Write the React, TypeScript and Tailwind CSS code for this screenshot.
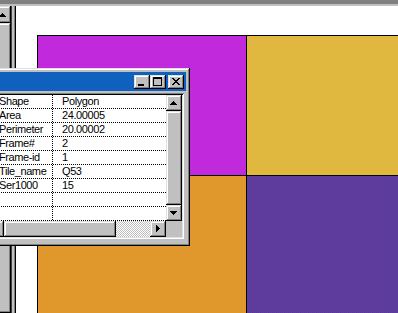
const raised =
  'bg-[#c0c0c0] shadow-[inset_-1px_-1px_#000,inset_1px_1px_#dfdfdf,inset_-2px_-2px_#808080,inset_2px_2px_#fff]';

const rows: [string, string][] = [
  ['Shape', 'Polygon'],
  ['Area', '24.00005'],
  ['Perimeter', '20.00002'],
  ['Frame#', '2'],
  ['Frame-id', '1'],
  ['Tile_name', 'Q53'],
  ['Ser1000', '15'],
  ['', ''],
  ['', ''],
];

/* ─── Pixel glyphs ─── */
const Glyph = ({ d, w = 16, h = 14 }: { d: string; w?: number; h?: number }) => (
  <svg width={w} height={h} viewBox={`0 0 ${w} ${h}`} shapeRendering="crispEdges">
    <path d={d} fill="#000" />
  </svg>
);

const UP = 'M7 6h1v1h-1zM6 7h3v1h-3zM5 8h5v1h-5zM4 9h7v1h-7z';
const DOWN = 'M4 6h7v1h-7zM5 7h5v1h-5zM6 8h3v1h-3zM7 9h1v1h-1z';
const RIGHT = 'M6 4h1v7h-1zM7 5h1v5h-1zM8 6h1v3h-1zM9 7h1v1h-1z';
const MIN = 'M4 9h6v2h-6z';
const MAX = 'M3 2h9v2h-9zM3 4h1v7h-1zM11 4h1v7h-1zM3 10h9v1h-9z';
const CLOSE =
  'M4 3h2v1h-2zM10 3h2v1h-2zM5 4h2v1h-2zM9 4h2v1h-2zM6 5h4v1h-4zM7 6h2v1h-2zM6 7h4v1h-4zM5 8h2v1h-2zM9 8h2v1h-2zM4 9h2v1h-2zM10 9h2v1h-2z';

const TitleButton = ({ d }: { d: string }) => (
  <div className={`h-[14px] w-[16px] ${raised}`}>
    <Glyph d={d} />
  </div>
);

export default function App() {
  return (
    <div className="relative h-[313px] w-[398px] overflow-hidden bg-[#c0c0c0] font-['Liberation_Sans',Arial,sans-serif] text-[11px] tracking-[-0.4px] text-black">
      {/* ── App frame top ── */}
      <div className="h-[4px] bg-[#808080]" />
      <div className="h-[2px] bg-[#c0c0c0]" />

      <div className="flex h-[307px]">
        {/* ── Left scrollbar of the map window ── */}
        <div className="flex w-[11px] flex-col overflow-hidden">
          <div className={`ml-[-5px] h-[17px] w-[16px] shrink-0 ${raised}`}>
            <div className="pt-[1px]">
              <Glyph d={UP} />
            </div>
          </div>
          <div className={`ml-[-5px] w-[16px] flex-1 ${raised}`} />
        </div>
        <div className="w-px bg-[#404040]" />
        <div className="w-[2px] bg-[#c0c0c0]" />
        <div className="w-px bg-[#808080]" />
        <div className="w-px bg-black" />

        {/* ── Map canvas ── */}
        <div className="flex-1 bg-white pl-[21px] pt-[29px]">
          <div className="grid h-full grid-cols-[208px_1fr] grid-rows-[139px_1fr] gap-px border-l border-t border-black bg-black">
            <div className="bg-[#c02adc]" />
            <div className="bg-[#e0b840]" />
            <div className="bg-[#e0982c]" />
            <div className="bg-[repeating-conic-gradient(#5a3a9a_0_25%,#613fa1_0_50%)] bg-[length:2px_2px]" />
          </div>
        </div>
      </div>

      {/* ── Attributes window ── */}
      <div className="absolute left-[-20px] top-[68px] w-[210px] bg-[#c0c0c0] p-[4px] shadow-[inset_-1px_-1px_#000,inset_1px_1px_#dfdfdf,inset_-2px_-2px_#808080,inset_2px_2px_#fff]">
        <div className="flex h-[19px] items-center justify-end bg-[#1061bd] pr-[2px]">
          <TitleButton d={MIN} />
          <TitleButton d={MAX} />
          <div className="w-[2px]" />
          <TitleButton d={CLOSE} />
        </div>

        <div className="mx-[2px] mb-[3px] mt-[2px] p-[2px] shadow-[inset_1px_1px_#808080,inset_-1px_-1px_#fff,inset_2px_2px_#000,inset_-2px_-2px_#dfdfdf]">
          <div className="flex">
            <div className="w-[178px] bg-white">
              {rows.map(([field, value], i) => (
                <div key={i} className="flex h-[14px] border-b border-dotted border-black leading-[13px]">
                  <div className="w-[65px] shrink-0 border-r border-dotted border-black pl-[11px]">{field}</div>
                  <div className="pl-[9px]">{value}</div>
                </div>
              ))}
            </div>
            <div className="flex h-[126px] w-[16px] flex-col">
              <div className={`h-[16px] w-[16px] shrink-0 ${raised}`}>
                <Glyph d={UP} h={16} />
              </div>
              <div className={`flex-1 ${raised}`} />
              <div className={`h-[16px] w-[16px] shrink-0 ${raised}`}>
                <Glyph d={DOWN} h={16} />
              </div>
            </div>
          </div>

          <div className="flex h-[16px]">
            <div className={`w-[16px] shrink-0 ${raised}`} />
            <div className={`w-[112px] shrink-0 ${raised}`} />
            <div className="flex-1 bg-[repeating-conic-gradient(#c0c0c0_0_25%,#ffffff_0_50%)] bg-[length:2px_2px]" />
            <div className={`w-[16px] shrink-0 ${raised}`}>
              <Glyph d={RIGHT} h={16} />
            </div>
            <div className="w-[16px] shrink-0 bg-[#c0c0c0]" />
          </div>
        </div>
      </div>
    </div>
  );
}
